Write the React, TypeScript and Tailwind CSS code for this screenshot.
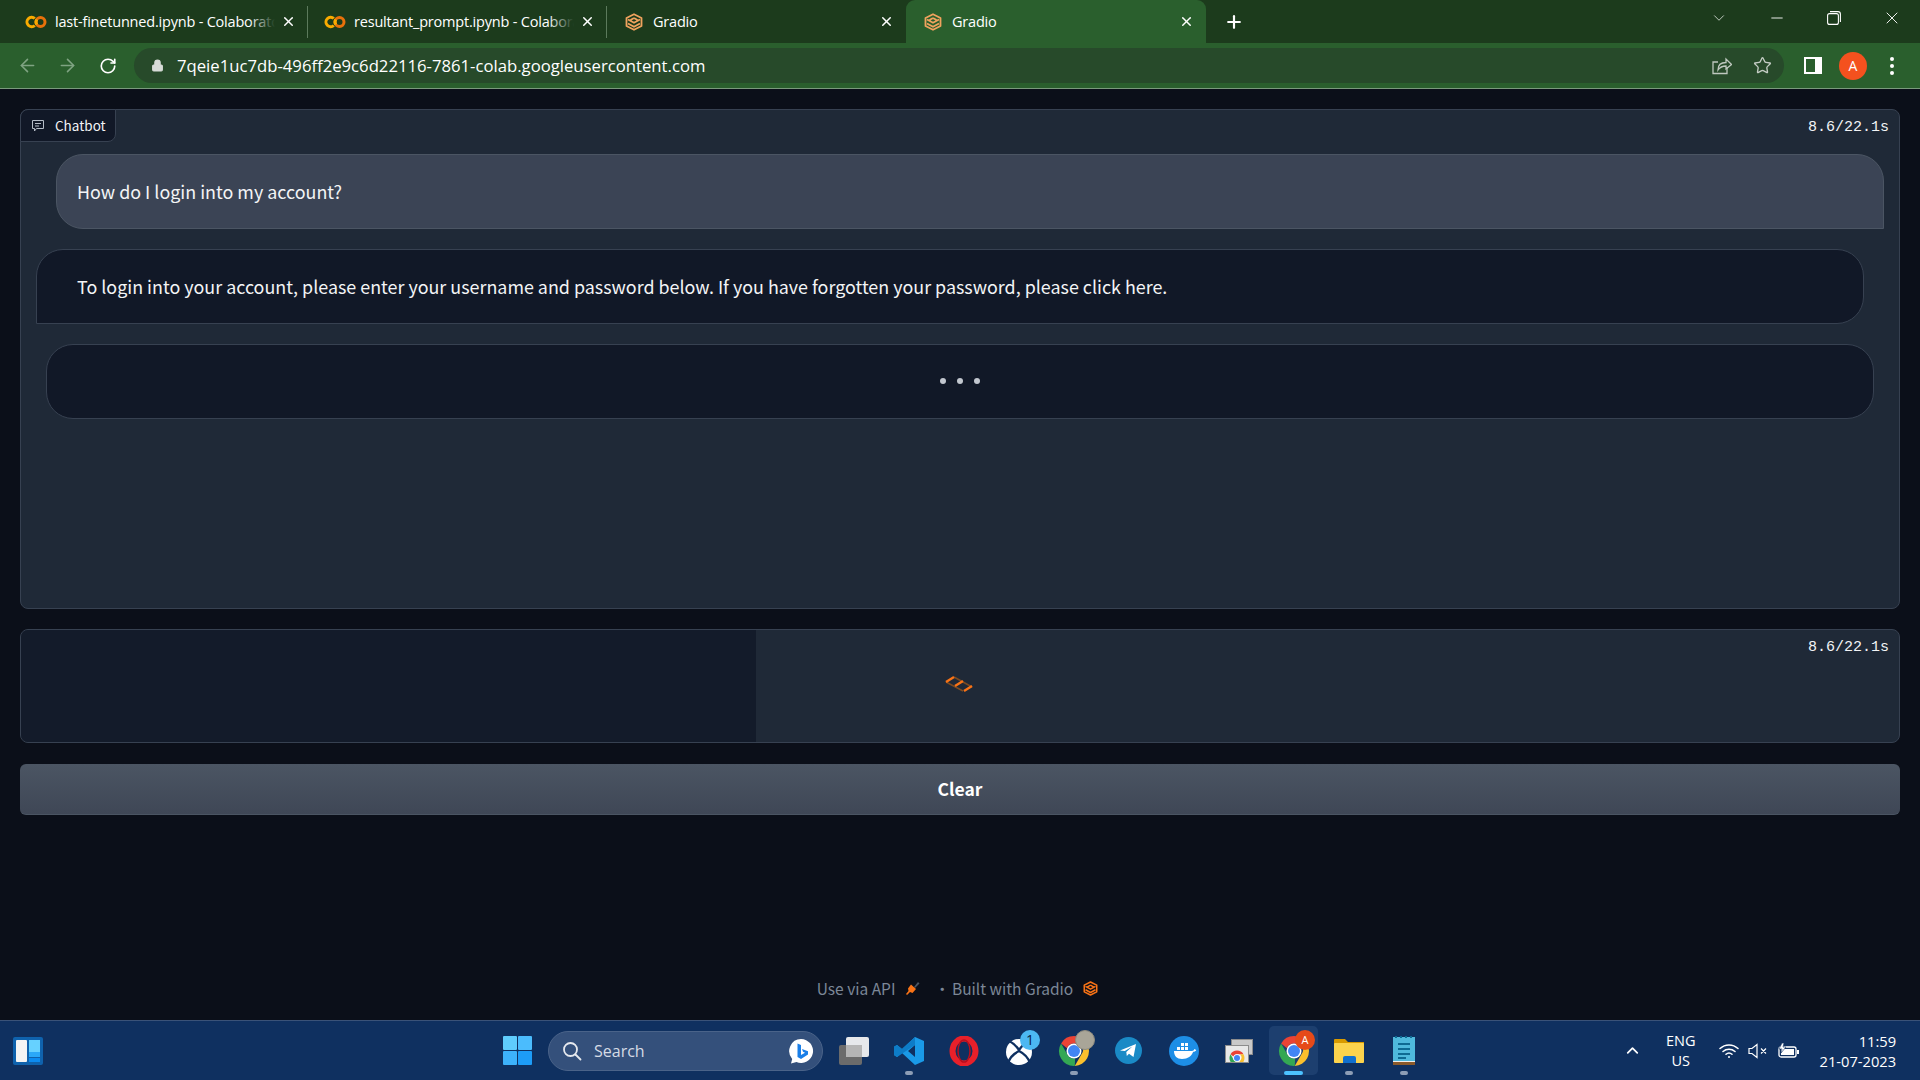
import React from 'react';
import {
  ArrowLeft,
  ArrowRight,
  ChevronDown,
  ChevronUp,
  Lock,
  Minus,
  Plus,
  RotateCw,
  Star,
  X,
} from 'lucide-react';

const uiFont = "font-['Open_Sans','Noto_Sans',sans-serif]";
const pageFont = "font-['Noto_Sans_CJK_SC','Noto_Sans',sans-serif]";

const ColabIcon = () => (
  <svg width="22" height="14" viewBox="0 0 22 14" fill="none" className="shrink-0">
    <path d="M9.800 3.500a4.700 4.700 0 1 0 0 7" stroke="#f9ab00" strokeWidth="3" />
    <circle cx="15.500" cy="7" r="4.500" stroke="#e8710a" strokeWidth="3" />
    <path d="M11.800 4.500a4.500 4.500 0 0 0 0 5" stroke="#f9ab00" strokeWidth="3" />
  </svg>
);

// layered hexagon of the gradio logo
const GradioIcon = ({ color = '#f0a35e', size = 18 }: { color?: string; size?: number }) => (
  <svg width={size} height={size} viewBox="0 0 18 18" fill="none" className="shrink-0">
    <path d="M9 1.200 16.500 5v8L9 16.800 1.500 13V5Z" stroke={color} strokeWidth="1.800" strokeLinejoin="round" />
    <path d="M3 6.500 9 9.800l6-3.300M9 5 12.500 7M9 5 5.500 7M3 10.500 9 13.800l6-3.300" stroke={color} strokeWidth="1.800" strokeLinejoin="round" />
  </svg>
);

const Tab = ({
  title,
  colab,
  active,
  last,
}: {
  title: string;
  colab?: boolean;
  active?: boolean;
  last?: boolean;
}) => (
  <div
    className={`relative flex items-center shrink-0 ${active ? 'w-[300px] h-[43px] bg-[#2a5f2d] rounded-t-[9px] pl-4' : 'w-[299px] h-[32px] pl-4'}`}
  >
    {colab ? <ColabIcon /> : <div className="w-[22px] flex justify-center shrink-0"><GradioIcon /></div>}
    <div className="relative ml-[8px] w-[220px] overflow-hidden whitespace-nowrap text-[14.5px] tracking-[-0.2px] text-white">
      {title}
      {colab && (
        <span className="absolute right-0 top-0 bottom-0 w-[26px] bg-gradient-to-r from-transparent to-[#1c3b1c]" />
      )}
    </div>
    <X size={15} strokeWidth={2.4} className="absolute right-[12px] text-white" />
    {!active && !last && <div className="absolute right-0 top-0 bottom-0 w-px bg-[#5c7a5c]" />}
  </div>
);

const ChromeIcon = ({ size = 36 }: { size?: number }) => (
  <svg width={size} height={size} viewBox="0 0 48 48">
    <path d="M24 4a20 20 0 0 1 17.300 10H24a10 10 0 0 0-9.300 6.300L6.800 13.900A20 20 0 0 1 24 4Z" fill="#ea4335" />
    <path d="M41.300 14A20 20 0 0 1 25 44l8.600-15A10 10 0 0 0 32 14Z" fill="#fbc02d" />
    <path d="M6.800 13.900 15.400 29A10 10 0 0 0 25.500 34L25 44A20 20 0 0 1 6.800 13.900Z" fill="#34a853" />
    <circle cx="24" cy="24" r="10" fill="#fff" />
    <circle cx="24" cy="24" r="8" fill="#4285f4" />
  </svg>
);

const TaskIcon = ({
  children,
  dot,
  active,
}: {
  children: React.ReactNode;
  dot?: boolean;
  active?: boolean;
}) => (
  <div
    className={`relative w-[49px] h-[49px] rounded-[5px] flex items-center justify-center ${active ? 'bg-[#1d3f6f]' : ''}`}
  >
    {children}
    {dot && <div className="absolute bottom-0 left-[21px] w-[8px] h-[4px] rounded-full bg-[#8d9db5]" />}
    {active && <div className="absolute bottom-0 left-[15px] w-[19px] h-[4px] rounded-full bg-[#4cc2ff]" />}
  </div>
);

const Taskbar = () => (
  <div className={`h-[60px] shrink-0 flex items-center bg-[#0f3060] border-t border-[#3a5278] ${uiFont}`}>
    <svg width="30" height="28" viewBox="0 0 30 28" className="ml-[13px]">
      <rect width="30" height="28" rx="2" fill="#0f62ad" />
      <rect x="3" y="3" width="11" height="22" rx="1" fill="#f4f4f4" />
      <rect x="16" y="3" width="11" height="12" fill="#66d1ff" />
      <rect x="16" y="15" width="11" height="5" fill="#2ba8f8" />
      <rect x="16" y="21" width="11" height="4" fill="#0c8bf0" />
    </svg>

    <svg width="29" height="29" viewBox="0 0 29 29" className="ml-[460px]">
      <rect width="14" height="14" rx="1" fill="#5fcdfd" />
      <rect x="15" width="14" height="14" rx="1" fill="#4bbcfd" />
      <rect y="15" width="14" height="14" rx="1" fill="#3db2fb" />
      <rect x="15" y="15" width="14" height="14" rx="1" fill="#1d9cf7" />
    </svg>

    <div className="ml-[16px] w-[275px] h-[40px] rounded-full bg-[#34507b] border border-[#4a6389] flex items-center pl-[13px] pr-[8px]">
      <svg width="20" height="20" viewBox="0 0 20 20" fill="none" stroke="#e6e9ee" strokeWidth="1.800">
        <circle cx="8.500" cy="8.500" r="6.500" />
        <path d="m13.500 13.500 5 5" strokeLinecap="round" />
      </svg>
      <span className="ml-[12px] text-[16px] text-[#d5dbe5]">Search</span>
      <svg width="26" height="26" viewBox="0 0 26 26" className="ml-auto">
        <path d="M13 1a12 12 0 1 1-4.500 23.100L3 25.500l1.200-4.600A12 12 0 0 1 13 1Z" fill="#fff" />
        <path d="M9.500 5.500 13 7v10l4-2.300-2-1-1-2.700 6 2.200v3.400L13 21l-3.500-2Z" fill="#1a7fe8" />
      </svg>
    </div>

    <div className="ml-[6px] flex items-center gap-[6px]">
      <TaskIcon>
        <div className="relative w-[30px] h-[28px]">
          <div className="absolute left-0 bottom-0 w-[23px] h-[20px] rounded-[2px] bg-[#6b6b6b]" />
          <div className="absolute right-0 top-0 w-[23px] h-[20px] rounded-[2px] bg-[#f2f2f2]/95" />
          <div className="absolute left-[7px] top-[8px] w-[16px] h-[12px] bg-[#b5b5b5]" />
        </div>
      </TaskIcon>
      <TaskIcon dot>
        <svg width="30" height="30" viewBox="0 0 30 30">
          <path d="M21 1 30 5v20l-9 4-13-12-5 4-3-2v-8l3-2 5 4Zm0 8-7 6 7 6Z" fill="#1a9ae8" />
          <path d="M0 10.500 3 9l5 4 13-12v8L3 21l-3-2Z" fill="#0d7cc8" />
        </svg>
      </TaskIcon>
      <TaskIcon>
        <svg width="30" height="30" viewBox="0 0 30 30" fill="none">
          <ellipse cx="15" cy="15" rx="11.500" ry="12.500" stroke="#e8202a" strokeWidth="6" />
          <ellipse cx="15" cy="15" rx="6" ry="11" stroke="#b80f1d" strokeWidth="1.500" />
        </svg>
      </TaskIcon>
      <TaskIcon>
        <svg width="28" height="28" viewBox="0 0 28 28" className="mt-[2px]">
          <circle cx="14" cy="14" r="13" fill="#fff" />
          <path d="M4 3c4 2 8 6 10 9 2-3 6-7 10-9M3 25c2-6 7-10 11-12 4 2 9 6 11 12" fill="none" stroke="#0f3060" strokeWidth="2.400" />
        </svg>
        <div className="absolute right-[3px] top-[4px] w-[20px] h-[20px] rounded-full bg-[#4cb8f2] flex items-center justify-center text-[14px] leading-none text-[#0b2344]">
          1
        </div>
      </TaskIcon>
      <TaskIcon dot>
        <ChromeIcon />
        <div className="absolute right-[3px] top-[4px] w-[20px] h-[20px] rounded-full bg-[#a9a598] border border-[#8f8b7e]" />
      </TaskIcon>
      <TaskIcon>
        <svg width="27" height="27" viewBox="0 0 27 27">
          <circle cx="13.500" cy="13.500" r="13.500" fill="#1a8ac6" />
          <path d="M5 13.500 21 7l-2.500 13-4.500-3.200-2.200 2.200-.5-4 6-5.500-7.500 4.600Z" fill="#fff" />
        </svg>
      </TaskIcon>
      <TaskIcon>
        <svg width="30" height="30" viewBox="0 0 30 30">
          <circle cx="15" cy="15" r="15" fill="#1d8ee6" />
          <path d="M5 15h18c1 0 2-1 2.500-2 1 .3 1.500 1 1.700 1.500-.8 1-2 1.300-3 1.300C22.500 20 19 23 13 23c-5 0-8-3-8-8Z" fill="#fff" />
          <path d="M8 11h3v3H8Zm4 0h3v3h-3Zm4 0h3v3h-3Zm-4-4h3v3h-3Zm4 0h3v3h-3Z" fill="#fff" />
        </svg>
      </TaskIcon>
      <TaskIcon>
        <div className="relative w-[28px] h-[24px]">
          <div className="absolute right-0 top-0 w-[22px] h-[16px] bg-[#c9c9c9] border border-[#8c8c8c]" />
          <div className="absolute left-0 bottom-0 w-[24px] h-[18px] bg-[#e8e8e8] border border-[#8c8c8c] overflow-hidden flex justify-center">
            <div className="mt-[3px]">
              <ChromeIcon size={18} />
            </div>
          </div>
        </div>
      </TaskIcon>
      <TaskIcon active>
        <ChromeIcon />
        <div className="absolute right-[3px] top-[4px] w-[20px] h-[20px] rounded-full bg-[#e64a19] flex items-center justify-center text-[11px] text-white">
          A
        </div>
      </TaskIcon>
      <TaskIcon dot>
        <svg width="30" height="28" viewBox="0 0 30 28">
          <path d="M0 3a1 1 0 0 1 1-1h10l3 3h16v4H0Z" fill="#d99a00" />
          <rect y="6" width="30" height="20" rx="1" fill="#fcd34d" />
          <path d="M9 26v-5a2 2 0 0 1 2-2h9a2 2 0 0 1 2 2v5Z" fill="#1170cf" />
        </svg>
      </TaskIcon>
      <TaskIcon dot>
        <svg width="22" height="30" viewBox="0 0 22 30">
          <rect y="1" width="22" height="26" fill="#4fb9dc" />
          <rect y="26" width="22" height="3" fill="#8a5a2b" />
          <rect y="25" width="22" height="1" fill="#eee" />
          <path d="M5 8h12M5 13h12M5 18h12M5 22h8" stroke="#0e6a92" strokeWidth="2" />
          <path d="M2 1h2M7 1h2M12 1h2M17 1h2" stroke="#0e6a92" strokeWidth="2" />
        </svg>
      </TaskIcon>
    </div>

    <ChevronUp size={19} strokeWidth={2.200} className="ml-[195px] text-white" />
    <div className="ml-[24px] flex flex-col items-center text-[14.500px] leading-[20px] text-white">
      <span>ENG</span>
      <span>US</span>
    </div>
    <svg width="20" height="16" viewBox="0 0 20 16" fill="none" stroke="#fff" strokeWidth="1.500" className="ml-[23px]">
      <path d="M1 5.500a13 13 0 0 1 18 0M4 8.500a9 9 0 0 1 12 0M7 11.300a4.500 4.500 0 0 1 6 0" strokeLinecap="round" />
      <circle cx="10" cy="14" r="1" fill="#fff" stroke="none" />
    </svg>
    <svg width="20" height="16" viewBox="0 0 20 16" fill="none" stroke="#fff" strokeWidth="1.200" className="ml-[9px]">
      <path d="M1 5.500h3L9 1.500v13L4 10.500H1ZM13 5.500l5 5M18 5.500l-5 5" />
    </svg>
    <svg width="21" height="16" viewBox="0 0 21 16" className="ml-[10px]">
      <rect x="1" y="4" width="17" height="10" rx="2" fill="none" stroke="#fff" strokeWidth="1.300" />
      <rect x="3" y="6" width="13" height="6" fill="#fff" />
      <rect x="19" y="7" width="2" height="4" fill="#fff" />
      <path d="M4 0 1 6h3L3 10l5-6H5l1-4Z" fill="#fff" stroke="#0f3060" strokeWidth="0.600" />
    </svg>
    <div className="ml-[21px] flex flex-col items-end text-[14.700px] leading-[20px] text-white">
      <span>11:59</span>
      <span>21-07-2023</span>
    </div>
  </div>
);

const BrowserChrome = () => (
  <div className={`shrink-0 ${uiFont}`}>
    <div className="h-[43px] bg-[#1c3b1c] flex items-end pl-[9px] relative">
      <div className="flex items-center h-[43px]">
        <Tab title="last-finetunned.ipynb - Colaboratory" colab />
        <Tab title="resultant_prompt.ipynb - Colaboratory" colab />
        <Tab title="Gradio" last />
        <Tab title="Gradio" active />
        <Plus size={20} strokeWidth={2.600} className="ml-[18px] text-white" />
      </div>
      <div className="ml-auto flex items-center h-[36px] self-start pr-[18px]">
        <ChevronDown size={18} strokeWidth={1.200} className="text-[#cfd8cf]" />
        <Minus size={18} strokeWidth={1.200} className="ml-[40px] text-white" />
        <svg width="14" height="14" viewBox="0 0 14 14" fill="none" stroke="#fff" strokeWidth="1.100" className="ml-[41px]">
          <rect x="0.600" y="2.600" width="10.800" height="10.800" rx="2" />
          <path d="M3 .6h8a2.400 2.400 0 0 1 2.400 2.400v8" />
        </svg>
        <X size={20} strokeWidth={1.100} className="ml-[41px] text-white" />
      </div>
    </div>
    <div className="h-[46px] bg-[#2a5f2d] border-b border-[#7a9a7c] flex items-center pl-[17px]">
      <ArrowLeft size={21} strokeWidth={1.800} className="text-[#7fa382]" />
      <ArrowRight size={21} strokeWidth={1.800} className="ml-[19px] text-[#7fa382]" />
      <RotateCw size={18} strokeWidth={2.200} className="ml-[21px] text-white" />
      <div className="ml-[17px] w-[1650px] h-[35px] rounded-full bg-[#274a2a] flex items-center pl-[17px] pr-[12px]">
        <Lock size={13} fill="#d8dcd8" strokeWidth={2} className="text-[#d8dcd8]" />
        <span className="ml-[13px] text-[16.700px] text-white">
          7qeie1uc7db-496ff2e9c6d22116-7861-colab.googleusercontent.com
        </span>
        <svg width="20" height="18" viewBox="0 0 20 18" fill="none" stroke="#bfc8bf" strokeWidth="1.300" className="ml-auto mr-[21px]">
          <path d="M15 10v6.500H1V5h5" />
          <path d="M6 13c0-5 3-7.500 8-7.500V2l5.500 5.500L14 12V9C10.500 9 8 10 6 13Z" />
        </svg>
        <Star size={19} strokeWidth={1.700} className="text-[#c4ccc4]" />
      </div>
      <div className="ml-[20px] w-[18px] h-[17px] bg-white flex items-center pl-[2px]">
        <div className="w-[9px] h-[13px] bg-[#2a5f2d]" />
      </div>
      <div className="ml-[17px] w-[28px] h-[28px] rounded-full bg-[#f4511e] flex items-center justify-center text-[14px] text-white">
        A
      </div>
      <div className="ml-[23px] flex flex-col gap-[3px]">
        <div className="w-[4px] h-[4px] rounded-full bg-white" />
        <div className="w-[4px] h-[4px] rounded-full bg-white" />
        <div className="w-[4px] h-[4px] rounded-full bg-white" />
      </div>
    </div>
  </div>
);

const Timer = () => (
  <div className="absolute right-[10px] top-[9px] font-['Liberation_Mono',monospace] text-[15px] leading-[18px] text-[#f3f4f6]">
    8.6/22.1s
  </div>
);

const Chatbot = () => (
  <div className="relative h-[500px] shrink-0 rounded-[8px] bg-[#1f2937] border border-[#374151]">
    <div className="w-[96px] h-[33px] -mt-px -ml-px flex items-center gap-[11px] pl-[11px] rounded-tl-[8px] rounded-br-[8px] bg-[#111827] border border-[#374151] text-[13.500px] text-[#f3f4f6]">
      <svg width="12" height="12" viewBox="0 0 12 12" fill="none" stroke="#b5bcc7" strokeWidth="1">
        <path d="M.5.500h11v8h-7l-2 2.500v-2.500h-2ZM3 3.500h6M3 6h4" />
      </svg>
      Chatbot
    </div>
    <div className="flex flex-col gap-[20px] pt-[12px]">
      <div className="ml-[35px] mr-[15px] h-[75px] flex items-center pl-[20px] rounded-[27px] rounded-br-none bg-[#3b4455] border border-[#4b5563] text-[17.900px] text-[#f3f4f6]">
        How do I login into my account?
      </div>
      <div className="ml-[15px] mr-[35px] h-[75px] flex items-center pl-[40px] rounded-[27px] rounded-bl-none bg-[#111827] border border-[#374151] text-[17.900px] text-[#f3f4f6]">
        To login into your account, please enter your username and password below. If you have forgotten your password, please click here.
      </div>
      <div className="ml-[25px] mr-[25px] h-[75px] flex items-center justify-center gap-[11px] rounded-[27px] bg-[#111827] border border-[#374151]">
        <div className="w-[6px] h-[6px] rounded-full bg-[#c2c7cf] -mt-px" />
        <div className="w-[6px] h-[6px] rounded-full bg-[#c2c7cf] -mt-px" />
        <div className="w-[6px] h-[6px] rounded-full bg-[#c2c7cf] -mt-px" />
      </div>
    </div>
    <Timer />
  </div>
);

const Output = () => (
  <div className="relative h-[114px] shrink-0 rounded-[8px] bg-[#1f2937] border border-[#374151] overflow-hidden flex">
    <div className="w-[735px] bg-[#131b2a]" />
    <div className="flex-1 flex items-center justify-center pr-[738px]">
      <svg width="28" height="18" viewBox="0 0 28 18" fill="none" className="mt-[-4px]">
        <path d="M9 2 27 12M1 7 18 16" stroke="#7a4a22" strokeWidth="1.500" />
        <path d="M9 2 1 7M18 6 10 11M27 11 19 16" stroke="#f97316" strokeWidth="2.400" />
      </svg>
    </div>
    <Timer />
  </div>
);

const Footer = () => (
  <div className="mt-auto h-[44px] pr-[5px] flex items-start justify-center text-[15.500px] leading-[24px] text-[#7c8797]">
    <span className="flex items-center gap-[10px]">
      Use via API
      <svg width="15" height="15" viewBox="0 0 15 15">
        <path d="M9 6 13 1l1.500 1.500L10 7Z" fill="#4b5563" />
        <path d="M6 3.500 11 8 7.500 12 5 11 2 14 1 13l2.500-3-.5-2.500Z" fill="#f97316" />
      </svg>
    </span>
    <span className="ml-[14px] mr-[2px]">·</span>
    <span className="flex items-center gap-[10px]">
      Built with Gradio
      <GradioIcon color="#f97316" size={15} />
    </span>
  </div>
);

export default function App() {
  return (
    <div className="w-full h-screen flex flex-col overflow-hidden bg-[#0b0f19]">
      <BrowserChrome />
      <main className={`flex-1 min-h-0 flex flex-col px-5 pt-5 gap-[20px] ${pageFont}`}>
        <Chatbot />
        <Output />
        <button className="h-[51px] mt-px shrink-0 rounded-[6px] bg-gradient-to-b from-[#4b5563] to-[#3f4756] border-b border-[#4b5563] text-[17.500px] font-semibold text-white">
          Clear
        </button>
        <Footer />
      </main>
      <Taskbar />
    </div>
  );
}
